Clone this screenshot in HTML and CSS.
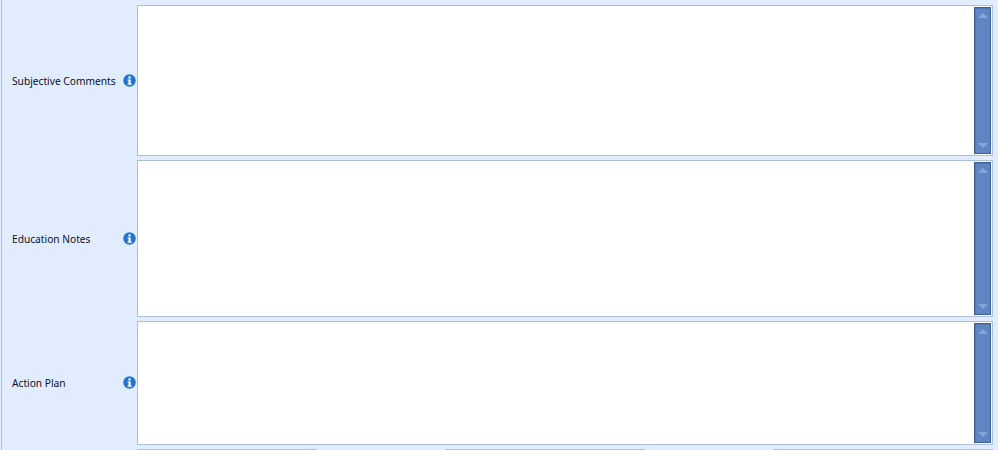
FILE: index.html
```html
<!DOCTYPE html>
<html lang="en">
<head>
    <meta charset="UTF-8">
    <title>Notes Form</title>
    <link rel="stylesheet" href="styles.css">
</head>
<body>
    <div class="form-panel">
        <div class="form-row row-subjective">
            <label class="field-label">Subjective Comments</label>
            <svg class="info-icon" viewBox="0 0 13 13"><circle cx="6.5" cy="6.5" r="6.2" fill="#1f74d6"/><rect x="5.4" y="2.4" width="2.3" height="2.1" fill="#fff"/><path d="M4.5 5.4h3.2v4.1h1v1.2H4.5V9.5h1V6.6h-1z" fill="#fff"/></svg>
            <div class="text-box">
                <div class="scrollbar">
                    <span class="arrow-up"></span>
                    <span class="arrow-down"></span>
                </div>
            </div>
        </div>
        <div class="form-row row-education">
            <label class="field-label">Education Notes</label>
            <svg class="info-icon" viewBox="0 0 13 13"><circle cx="6.5" cy="6.5" r="6.2" fill="#1f74d6"/><rect x="5.4" y="2.4" width="2.3" height="2.1" fill="#fff"/><path d="M4.5 5.4h3.2v4.1h1v1.2H4.5V9.5h1V6.6h-1z" fill="#fff"/></svg>
            <div class="text-box">
                <div class="scrollbar">
                    <span class="arrow-up"></span>
                    <span class="arrow-down"></span>
                </div>
            </div>
        </div>
        <div class="form-row row-action">
            <label class="field-label">Action Plan</label>
            <svg class="info-icon" viewBox="0 0 13 13"><circle cx="6.5" cy="6.5" r="6.2" fill="#1f74d6"/><rect x="5.4" y="2.4" width="2.3" height="2.1" fill="#fff"/><path d="M4.5 5.4h3.2v4.1h1v1.2H4.5V9.5h1V6.6h-1z" fill="#fff"/></svg>
            <div class="text-box">
                <div class="scrollbar">
                    <span class="arrow-up"></span>
                    <span class="arrow-down"></span>
                </div>
            </div>
        </div>
        <div class="stub-row">
            <div class="stub stub-first"></div>
            <div class="stub stub-second"></div>
            <div class="stub stub-third"></div>
        </div>
    </div>
</body>
</html>
```

FILE: styles.css
```css
html, body {
    margin: 0;
    padding: 0;
    height: 450px;
    overflow: hidden;
    background-color: #e1edfe;
}
.form-panel {
    height: 450px;
    box-sizing: border-box;
    margin-left: 1px;
    padding-top: 5px;
    padding-right: 5px;
    border-left: 1px solid #a9c3e3;
    display: flex;
    flex-direction: column;
    font-family: "Noto Sans", Tahoma, sans-serif;
}
.form-row {
    display: flex;
    align-items: center;
}
.row-subjective {
    height: 151px;
    margin-bottom: 4px;
}
.row-education {
    height: 157px;
    margin-bottom: 4px;
}
.row-action {
    height: 124px;
    margin-bottom: 4px;
}
.row-action .info-icon {
    margin-bottom: 2px;
}
.field-label {
    width: 111px;
    padding-left: 10px;
    font-size: 10.2px;
    color: #0d0d2b;
    white-space: nowrap;
}
.info-icon {
    width: 13px;
    height: 13px;
    margin-right: 1px;
    flex-shrink: 0;
}
.text-box {
    flex: 1;
    height: 100%;
    box-sizing: border-box;
    background-color: #ffffff;
    border: 1px solid #a9bfdc;
    padding: 1px;
    display: flex;
    justify-content: flex-end;
}
.scrollbar {
    width: 17px;
    box-sizing: border-box;
    background-color: #5f86c2;
    border: 1px solid #3a6299;
    box-shadow: inset 1px 1px 0 #4f76b0;
    display: flex;
    flex-direction: column;
    justify-content: space-between;
    align-items: center;
    padding: 5px 0;
}
.arrow-up {
    border-left: 5px solid transparent;
    border-right: 5px solid transparent;
    border-bottom: 5px solid #86a6d8;
}
.arrow-down {
    border-left: 5px solid transparent;
    border-right: 5px solid transparent;
    border-top: 5px solid #86a6d8;
}
.stub-row {
    display: flex;
    padding-left: 135px;
}
.stub {
    height: 1px;
    background-color: #a9c3e3;
}
.stub-first {
    width: 180px;
    margin-right: 128px;
}
.stub-second {
    width: 200px;
    margin-right: 128px;
}
.stub-third {
    width: 220px;
}
```
